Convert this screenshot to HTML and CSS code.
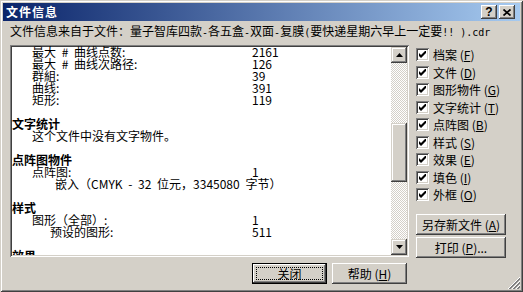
FILE: index.html
```html
<!DOCTYPE html>
<html lang="zh">
<head>
    <meta charset="UTF-8">
    <title>文件信息</title>
    <link rel="stylesheet" href="styles.css">
</head>
<body>
<div class="window">
    <div class="titlebar">
        <span class="title">文件信息</span>
        <span class="tbtn help">?</span>
        <span class="tbtn">
            <svg width="8" height="7" viewBox="0 0 8 7"><path d="M0.5 0.5L7.5 6.5M7.5 0.5L0.5 6.5" stroke="#000" stroke-width="1.7"/></svg>
        </span>
    </div>

    <div class="content">
        <div class="source">文件信息来自于文件：量子智库四款<span class="lat">-</span>各五盒<span class="lat">-</span>双面<span class="lat">-</span>复膜<span class="lat">(</span>要快递星期六早上一定要<span class="lat">!! ).cdr</span></div>

        <div class="main">
            <div class="left">
                <div class="listbox">
                    <div class="list">
                        <div class="row"><span class="k l1">最大 # 曲线点数:</span><span>2161</span></div>
                        <div class="row"><span class="k l1">最大 # 曲线次路径:</span><span>126</span></div>
                        <div class="row"><span class="k l1">群組:</span><span>39</span></div>
                        <div class="row"><span class="k l1">曲线:</span><span>391</span></div>
                        <div class="row"><span class="k l1">矩形:</span><span>119</span></div>
                        <div class="row"></div>
                        <div class="row head">文字统计</div>
                        <div class="row"><span class="l1">这个文件中没有文字物件。</span></div>
                        <div class="row"></div>
                        <div class="row head">点阵图物件</div>
                        <div class="row"><span class="k l1">点阵图:</span><span>1</span></div>
                        <div class="row"><span class="l3">嵌入（CMYK - 32 位元，3345080 字节）</span></div>
                        <div class="row"></div>
                        <div class="row head">样式</div>
                        <div class="row"><span class="k l1">图形（全部）:</span><span>1</span></div>
                        <div class="row"><span class="k l2">预设的图形:</span><span>511</span></div>
                        <div class="row"></div>
                        <div class="row head">效果</div>
                        <div class="row"><span class="k l1">透镜:</span><span>0</span></div>
                    </div>
                    <div class="scrollbar">
                        <div class="sbtn">
                            <svg width="7" height="4" viewBox="0 0 7 4"><path d="M0 4L3.5 0L7 4Z" fill="#000"/></svg>
                        </div>
                        <div class="track"><div class="thumb"></div></div>
                        <div class="sbtn">
                            <svg width="7" height="4" viewBox="0 0 7 4"><path d="M0 0L7 0L3.5 4Z" fill="#000"/></svg>
                        </div>
                    </div>
                </div>

                <div class="actions">
                    <button class="btn btn-default"><span class="focus">关闭</span></button>
                    <button class="btn">帮助 (<u>H</u>)</button>
                </div>
            </div>

            <div class="side">
                <div class="checks">
                    <div class="check"><span class="box"><svg width="7" height="7" viewBox="0 0 7 7"><path d="M0 2L2 4L7 -1L7 2L2 7L0 5Z" fill="#000"/></svg></span><span class="check-label">档案 (<u>F</u>)</span></div>
                    <div class="check"><span class="box"><svg width="7" height="7" viewBox="0 0 7 7"><path d="M0 2L2 4L7 -1L7 2L2 7L0 5Z" fill="#000"/></svg></span><span class="check-label">文件 (<u>D</u>)</span></div>
                    <div class="check"><span class="box"><svg width="7" height="7" viewBox="0 0 7 7"><path d="M0 2L2 4L7 -1L7 2L2 7L0 5Z" fill="#000"/></svg></span><span class="check-label">图形物件 (<u>G</u>)</span></div>
                    <div class="check"><span class="box"><svg width="7" height="7" viewBox="0 0 7 7"><path d="M0 2L2 4L7 -1L7 2L2 7L0 5Z" fill="#000"/></svg></span><span class="check-label">文字统计 (<u>T</u>)</span></div>
                    <div class="check"><span class="box"><svg width="7" height="7" viewBox="0 0 7 7"><path d="M0 2L2 4L7 -1L7 2L2 7L0 5Z" fill="#000"/></svg></span><span class="check-label">点阵图 (<u>B</u>)</span></div>
                    <div class="check"><span class="box"><svg width="7" height="7" viewBox="0 0 7 7"><path d="M0 2L2 4L7 -1L7 2L2 7L0 5Z" fill="#000"/></svg></span><span class="check-label">样式 (<u>S</u>)</span></div>
                    <div class="check"><span class="box"><svg width="7" height="7" viewBox="0 0 7 7"><path d="M0 2L2 4L7 -1L7 2L2 7L0 5Z" fill="#000"/></svg></span><span class="check-label">效果 (<u>E</u>)</span></div>
                    <div class="check"><span class="box"><svg width="7" height="7" viewBox="0 0 7 7"><path d="M0 2L2 4L7 -1L7 2L2 7L0 5Z" fill="#000"/></svg></span><span class="check-label">填色 (<u>I</u>)</span></div>
                    <div class="check"><span class="box"><svg width="7" height="7" viewBox="0 0 7 7"><path d="M0 2L2 4L7 -1L7 2L2 7L0 5Z" fill="#000"/></svg></span><span class="check-label">外框 (<u>O</u>)</span></div>
                </div>
                <div class="side-buttons">
                    <button class="btn">另存新文件 (<u>A</u>)</button>
                    <button class="btn">打印 (<u>P</u>)...</button>
                </div>
            </div>
        </div>
    </div>

    <svg class="grip" width="12" height="12" viewBox="0 0 12 12" shape-rendering="crispEdges">
        <path d="M12 0L0 12M12 4L4 12M12 8L8 12" stroke="#fff"/>
        <path d="M12 1L1 12M12 2L2 12M12 5L5 12M12 6L6 12M12 9L9 12M12 10L10 12" stroke="#808080"/>
    </svg>
</div>
</body>
</html>
```

FILE: styles.css
```css
body {
    margin: 0;
    font-family: "Noto Sans CJK SC", sans-serif;
    font-size: 12px;
    color: #000;
}

.window {
    position: relative;
    width: 523px;
    height: 292px;
    box-sizing: border-box;
    padding: 3px;
    background: #d4d0c8;
    box-shadow: inset 1px 1px #d4d0c8, inset -1px -1px #404040,
                inset 2px 2px #fff, inset -2px -2px #808080;
}

.titlebar {
    height: 18px;
    display: flex;
    align-items: center;
    gap: 2px;
    padding: 0 5px 0 3px;
    background: linear-gradient(to right, #0a246a, #a6caf0);
    color: #fff;
    font-weight: bold;
}

.title {
    flex: 1;
    line-height: 18px;
    letter-spacing: 1px;
}

.tbtn {
    width: 16px;
    height: 14px;
    display: flex;
    align-items: center;
    justify-content: center;
    background: #d4d0c8;
    box-shadow: inset -1px -1px #404040, inset 1px 1px #fff,
                inset -2px -2px #808080, inset 2px 2px #d4d0c8;
}

.help {
    color: #000;
    font: bold 12px "Liberation Sans", sans-serif;
    line-height: 14px;
}

.content {
    padding: 0 14px 0 7px;
}

.source {
    margin-top: 4px;
    height: 12px;
    line-height: 12px;
    white-space: nowrap;
}

/* latin runs drawn on a 6px grid like the dialog font */
.lat {
    font-family: "DejaVu Sans Mono", monospace;
    font-size: 10px;
}

.main {
    display: grid;
    grid-template-columns: 399px 90px;
    column-gap: 7px;
    margin-top: 8px;
}

/* list box */
.listbox {
    height: 212px;
    box-sizing: border-box;
    padding: 2px;
    display: flex;
    background: #fff;
    box-shadow: inset 1px 1px #808080, inset -1px -1px #fff,
                inset 2px 2px #404040, inset -2px -2px #d4d0c8;
}

.list {
    flex: 1;
    margin-top: -1px;
    overflow: hidden;
    word-spacing: 3px;
}

.row {
    height: 12px;
    line-height: 12px;
    display: flex;
    white-space: nowrap;
}

.head {
    font-weight: bold;
}

.k {
    width: 240px;
    box-sizing: border-box;
    flex-shrink: 0;
}

.l1 { padding-left: 20px; }
.l2 { padding-left: 38px; }
.l3 { padding-left: 43px; }

.scrollbar {
    width: 16px;
    display: flex;
    flex-direction: column;
    background: repeating-conic-gradient(#fff 0 25%, #d4d0c8 0 50%) 0 0 / 2px 2px;
}

.sbtn, .thumb {
    background: #d4d0c8;
    box-shadow: inset -1px -1px #404040, inset 1px 1px #d4d0c8,
                inset -2px -2px #808080, inset 2px 2px #fff;
}

.sbtn {
    height: 16px;
    display: flex;
    align-items: center;
    justify-content: center;
}

.track {
    flex: 1;
    padding-top: 60px;
}

.thumb {
    height: 59px;
}

/* buttons */
.btn {
    height: 21px;
    padding: 0;
    border: 0;
    display: flex;
    align-items: center;
    justify-content: center;
    font: inherit;
    color: #000;
    background: #d4d0c8;
    box-shadow: inset -1px -1px #404040, inset 1px 1px #fff,
                inset -2px -2px #808080, inset 2px 2px #d4d0c8;
}

.btn-default {
    box-shadow: inset 0 0 0 1px #000, inset -2px -2px #404040,
                inset 2px 2px #fff, inset -3px -3px #808080;
}

.focus {
    align-self: stretch;
    flex: 1;
    margin: 4px;
    border: 1px dotted #000;
    display: flex;
    align-items: center;
    justify-content: center;
}

.actions {
    display: flex;
    justify-content: flex-end;
    gap: 5px;
    margin-top: 6px;
    padding-right: 2px;
}

.actions .btn {
    width: 75px;
}

/* check boxes */
.checks {
    margin-top: 3px;
}

.check {
    height: 17.5px;
    display: flex;
    align-items: flex-start;
}

.box {
    width: 13px;
    height: 13px;
    box-sizing: border-box;
    display: flex;
    align-items: center;
    justify-content: center;
    background: #fff;
    box-shadow: inset 1px 1px #808080, inset -1px -1px #fff,
                inset 2px 2px #404040, inset -2px -2px #d4d0c8;
}

.check-label {
    margin-left: 4px;
    line-height: 13px;
    white-space: nowrap;
}

.side-buttons {
    display: flex;
    flex-direction: column;
    gap: 2px;
    margin-top: 8px;
}

.grip {
    position: absolute;
    right: 3px;
    bottom: 3px;
}
```
